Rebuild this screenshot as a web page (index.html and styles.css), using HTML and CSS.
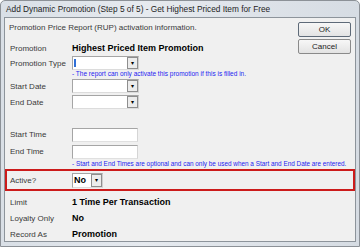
FILE: index.html
```html
<!DOCTYPE html>
<html lang="en">
<head>
<meta charset="UTF-8">
<title>Add Dynamic Promotion</title>
<link rel="stylesheet" href="styles.css">
</head>
<body>
<div class="window">
  <div class="titlebar">Add Dynamic Promotion (Step 5 of 5) - Get Highest Priced Item for Free</div>
  <div class="client">
    <div class="top">
      <div class="top-left">
        <div class="info">Promotion Price Report (RUP) activation information.</div>
        <div class="row r-promo">
          <span class="label">Promotion</span>
          <span class="value">Highest Priced Item Promotion</span>
        </div>
        <div class="row r-type">
          <span class="label">Promotion Type</span>
          <span class="combo"><span class="field"><span class="caret"></span></span><span class="drop">&#9662;</span></span>
        </div>
      </div>
      <div class="buttons">
        <button class="btn btn-default">OK</button>
        <button class="btn">Cancel</button>
      </div>
    </div>
    <div class="note n-type">- The report can only activate this promotion if this is filled in.</div>

    <div class="row r-date">
      <span class="label">Start Date</span>
      <span class="combo"><span class="field"></span><span class="drop">&#9662;</span></span>
    </div>
    <div class="row r-date">
      <span class="label">End Date</span>
      <span class="combo"><span class="field"></span><span class="drop">&#9662;</span></span>
    </div>

    <div class="row r-time first">
      <span class="label">Start Time</span>
      <span class="textbox"></span>
    </div>
    <div class="row r-time">
      <span class="label">End Time</span>
      <span class="textbox"></span>
    </div>
    <div class="note n-time">- Start and End Times are optional and can only be used when a Start and End Date are entered.</div>

    <div class="active-box">
      <span class="label">Active?</span>
      <span class="combo small"><span class="field">No</span><span class="drop">&#9662;</span></span>
    </div>

    <div class="row r-info first">
      <span class="label">Limit</span>
      <span class="value">1 Time Per Transaction</span>
    </div>
    <div class="row r-info">
      <span class="label">Loyalty Only</span>
      <span class="value">No</span>
    </div>
    <div class="row r-info">
      <span class="label">Record As</span>
      <span class="value">Promotion</span>
    </div>
  </div>
</div>
</body>
</html>
```

FILE: styles.css
```css
body {
  margin: 0;
  background: #ffffff;
  font-family: "Liberation Sans", Arial, sans-serif;
  font-size: 8px;
  color: #3a3a3a;
}
.window {
  width: 352px;
  height: 242px;
  padding: 0 3px 3px 3px;
  border: 1px solid #8c9197;
  border-radius: 5px 5px 0 0;
  background: linear-gradient(to right, #d9dfe6, #e6eaef 40%, #d6dce3);
}
.titlebar {
  height: 16px;
  line-height: 17px;
  padding-left: 2px;
  font-size: 8.3px;
  color: #1e1e1e;
  white-space: nowrap;
}
.client {
  height: 223px;
  border: 1px solid #8d949b;
  background: #f0f0f0;
}
.top {
  display: flex;
  justify-content: space-between;
}
.top-left {
  flex: 1;
}
.info {
  margin: 4px 0 0 4px;
  height: 12px;
  line-height: 12px;
  font-size: 8px;
}
.buttons {
  display: flex;
  flex-direction: column;
  gap: 2px;
  margin: 4px 4px 0 0;
}
.btn {
  width: 53px;
  height: 15px;
  padding: 0;
  font-family: "Liberation Sans", Arial, sans-serif;
  font-size: 8px;
  color: #222;
  background: linear-gradient(#f7f7f7, #e3e3e3);
  border: 1px solid #8a8a8a;
  border-radius: 2px;
}
.btn-default {
  border-color: #5e6a78;
}
.row {
  display: flex;
  align-items: center;
  padding-left: 5px;
}
.label {
  width: 62px;
  flex-shrink: 0;
}
.value {
  font-weight: bold;
  color: #000;
  font-size: 9px;
}
.r-promo {
  height: 16px;
  margin-top: 6px;
}
.r-type {
  height: 14px;
}
.combo {
  display: flex;
  width: 65px;
  height: 12px;
  border: 1px solid #a5a5a5;
  border-right-color: #cfcfcf;
  border-bottom-color: #dcdcdc;
  background: #fff;
}
.combo .field {
  flex: 1;
  display: flex;
  align-items: center;
  padding-left: 1px;
}
.caret {
  width: 2px;
  height: 8px;
  background: #2f6fd6;
}
.combo .drop {
  width: 9px;
  border: 1px solid #8e8e8e;
  background: #ececec;
  font-size: 6px;
  line-height: 10px;
  text-align: center;
  color: #000;
}
.combo.small {
  width: 29px;
  height: 13px;
}
.combo.small .field {
  font-weight: bold;
  font-size: 9px;
  color: #000;
}
.note {
  padding-left: 67px;
  color: #1d1df0;
  white-space: nowrap;
}
.n-type {
  height: 8px;
  line-height: 8px;
  font-size: 6.5px;
}
.r-date {
  height: 16px;
}
.r-date:first-of-type {
  margin-top: 1px;
}
.r-time {
  height: 17px;
}
.r-time.first {
  margin-top: 16px;
}
.textbox {
  width: 64px;
  height: 12px;
  border: 1px solid #a5a5a5;
  border-right-color: #d5d5d5;
  border-bottom-color: #e0e0e0;
  background: #fff;
}
.n-time {
  height: 7px;
  line-height: 7px;
  font-size: 6.4px;
}
.active-box {
  display: flex;
  align-items: center;
  height: 18px;
  margin-top: 2px;
  padding-left: 3px;
  border: 2px solid #cc1b1b;
}
.r-info {
  height: 16px;
}
.r-info.first {
  margin-top: 3px;
}
```
